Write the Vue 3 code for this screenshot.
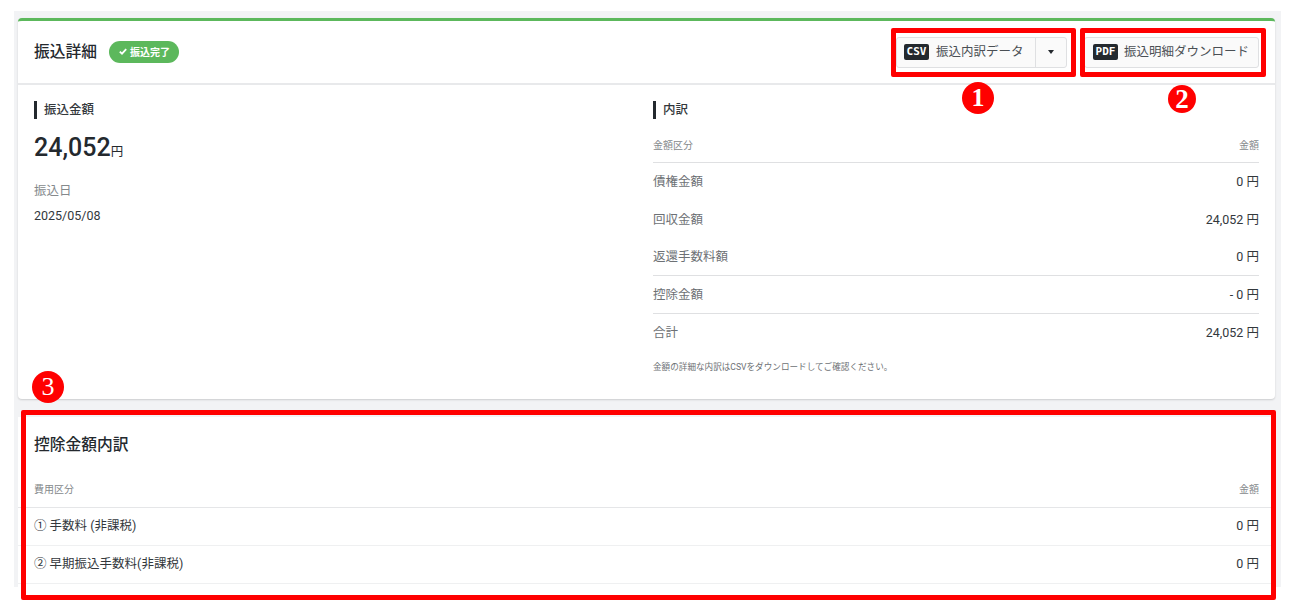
<script setup>
const rows = [
  { label: '債権金額', value: '0 円', line: false },
  { label: '回収金額', value: '24,052 円', line: false },
  { label: '返還手数料額', value: '0 円', line: true },
  { label: '控除金額', value: '- 0 円', line: true },
  { label: '合計', value: '24,052 円', line: false },
]
const fees = [
  { label: '① 手数料 (非課税)', value: '0 円' },
  { label: '② 早期振込手数料(非課税)', value: '0 円' },
]
</script>

<template>
  <div class="stage">
    <div class="page">
      <section class="card top">
        <header class="head">
          <div class="title-wrap">
            <h1 class="title">振込詳細</h1>
            <span class="badge">
              <svg width="8" height="7" viewBox="0 0 8 7"><path d="M.8 3.6 3 5.7 7.2 1.2" fill="none" stroke="#fff" stroke-width="1.8" /></svg>
              振込完了
            </span>
          </div>
          <div class="actions">
            <div class="btn group">
              <span class="main"><span class="tag">CSV</span><span class="lbl">振込内訳データ</span></span>
              <span class="caret-cell"><i class="caret"></i></span>
            </div>
            <div class="btn single"><span class="tag">PDF</span><span class="lbl">振込明細ダウンロード</span></div>
          </div>
        </header>
        <div class="body">
          <div class="left">
            <h2 class="sub">振込金額</h2>
            <p class="amount">24,052<small>円</small></p>
            <p class="date-label">振込日</p>
            <p class="date">2025/05/08</p>
          </div>
          <div class="right">
            <h2 class="sub">内訳</h2>
            <div class="thead"><span>金額区分</span><span>金額</span></div>
            <div v-for="r in rows" :key="r.label" class="row" :class="{ line: r.line }">
              <span class="rlabel">{{ r.label }}</span><span class="rval">{{ r.value }}</span>
            </div>
            <p class="note">金額の詳細な内訳はCSVをダウンロードしてご確認ください。</p>
          </div>
        </div>
      </section>
      <section class="card bottom">
        <h2 class="title2">控除金額内訳</h2>
        <div class="thead2"><span>費用区分</span><span>金額</span></div>
        <div v-for="f in fees" :key="f.label" class="row2">
          <span>{{ f.label }}</span><span class="rval">{{ f.value }}</span>
        </div>
      </section>
    </div>

    <div class="mark box1"></div>
    <div class="mark box2"></div>
    <div class="mark box3"></div>
    <div class="num n1">1</div>
    <div class="num n2">2</div>
    <div class="num n3">3</div>
  </div>
</template>

<style>
html, body { margin: 0; background: #fff; }
</style>

<style scoped>
.stage {
  position: relative;
  width: 1290px;
  height: 609px;
  overflow: hidden;
  font-family: Roboto, "Noto Sans CJK JP", sans-serif;
  color: #24292e;
}
h1, h2, p { margin: 0; }
.page {
  box-sizing: border-box;
  margin: 11px 0 0 14px;
  width: 1267px;
  height: 576px;
  padding: 7px 6px 0 4px;
  background: #f2f3f5;
}
.card { background: #fff; }
.top {
  height: 381px;
  box-sizing: border-box;
  border-top: 3px solid #5cb85c;
  border-radius: 4px;
  box-shadow: 0 1px 2px rgba(0, 0, 0, .16);
}
.head {
  height: 64px;
  box-sizing: border-box;
  border-bottom: 2px solid #e8e9eb;
  padding: 0 16px;
  display: flex;
  align-items: center;
  justify-content: space-between;
}
.title-wrap { display: flex; align-items: center; gap: 12px; }
.title { font-size: 15.75px; font-weight: 500; line-height: 20px; }
.badge {
  display: inline-flex;
  align-items: center;
  gap: 3px;
  height: 22px;
  box-sizing: border-box;
  padding: 0 9px 2px 10px;
  border-radius: 11px;
  background: #5cb85c;
  color: #fff;
  font-size: 10px;
  font-weight: 700;
}
.actions { display: flex; gap: 17px; }
.btn {
  height: 31px;
  box-sizing: border-box;
  border: 1px solid #dfe0e2;
  border-radius: 3px;
  background: #fafafa;
  display: flex;
  align-items: center;
  font-size: 12.5px;
  color: #4a4f54;
}
.group { width: 171px; }
.main { display: flex; align-items: center; flex: 1; padding-left: 7px; height: 100%; border-right: 1px solid #dfe0e2; }
.lbl { margin-bottom: 3px; }
.caret-cell { width: 30px; display: flex; justify-content: center; align-items: center; }
.caret { width: 0; height: 0; border: 3.5px solid transparent; border-top: 4px solid #24292e; border-bottom: 0; }
.single { width: 175px; padding-left: 8px; }
.tag {
  background: #24292e;
  color: #fff;
  font-family: "DejaVu Sans Mono", monospace;
  font-size: 11px;
  font-weight: 700;
  line-height: 16px;
  width: 25px;
  text-align: center;
  border-radius: 2px;
  margin-right: 7px;
}
.single .tag { margin-right: 6px; }
.body { display: grid; grid-template-columns: 619px 606px; padding: 16px 16px 0; }
.sub {
  border-left: 3px solid #24292e;
  padding: 0 0 1px 7px;
  font-size: 12.5px;
  font-weight: 500;
  line-height: 17px;
  color: #33383c;
}
.amount { font-size: 25px; font-weight: 500; line-height: 32px; margin-top: 13px; }
.amount small { font-size: 12.5px; font-weight: 400; }
.date-label { font-size: 12.5px; color: #85898c; margin-top: 14px; line-height: 18px; }
.date { font-size: 12.5px; margin-top: 7px; line-height: 18px; color: #33383c; }
.thead {
  display: flex;
  justify-content: space-between;
  height: 44px;
  box-sizing: border-box;
  padding-top: 20px;
  font-size: 10px;
  line-height: 14px;
  color: #85898c;
  border-bottom: 1px solid #dfe0e2;
}
.row {
  display: flex;
  justify-content: space-between;
  align-items: center;
  height: 37.8px;
  padding-bottom: 2px;
  font-size: 12.5px;
  border-bottom: 1px solid transparent;
  box-sizing: border-box;
}
.row.line { border-bottom-color: #dfe0e2; }
.rlabel { color: #6d7175; }
.rval { color: #33383c; }
.note { font-size: 8.6px; line-height: 12px; color: #6d7175; margin-top: 9px; }
.bottom { margin-top: 18px; height: 170px; padding: 0 16px; }
.title2 { font-size: 15.75px; font-weight: 500; line-height: 20px; padding-top: 18px; }
.thead2 {
  display: flex;
  justify-content: space-between;
  margin: 0 -16px;
  padding: 28px 16px 0;
  height: 53px;
  box-sizing: border-box;
  font-size: 10px;
  line-height: 14px;
  color: #85898c;
  border-bottom: 1.5px solid #e5e6e8;
}
.row2 {
  display: flex;
  justify-content: space-between;
  align-items: center;
  margin: 0 -16px;
  padding: 0 16px 4px;
  height: 38px;
  box-sizing: border-box;
  font-size: 12.5px;
  color: #33383c;
  border-bottom: 1px solid #eff0f1;
}
.mark { position: absolute; box-sizing: border-box; border: 5px solid #f00; border-radius: 2px; }
.box1 { left: 891px; top: 28px; width: 185px; height: 49px; }
.box2 { left: 1080px; top: 28px; width: 186px; height: 49px; }
.box3 { left: 21px; top: 410px; width: 1255px; height: 190px; }
.num {
  position: absolute;
  width: 32px;
  height: 32px;
  border-radius: 50%;
  background: #f00;
  color: #fff;
  font-family: "Liberation Serif", serif;
  font-size: 26px;
  line-height: 32px;
  text-align: center;
}
.n1 { left: 962px; top: 82px; font-weight: 700; }
.n2 { left: 1168px; top: 85px; width: 28px; height: 28px; line-height: 28px; font-size: 27px; font-weight: 700; }
.n3 { left: 32px; top: 371px; }
</style>
